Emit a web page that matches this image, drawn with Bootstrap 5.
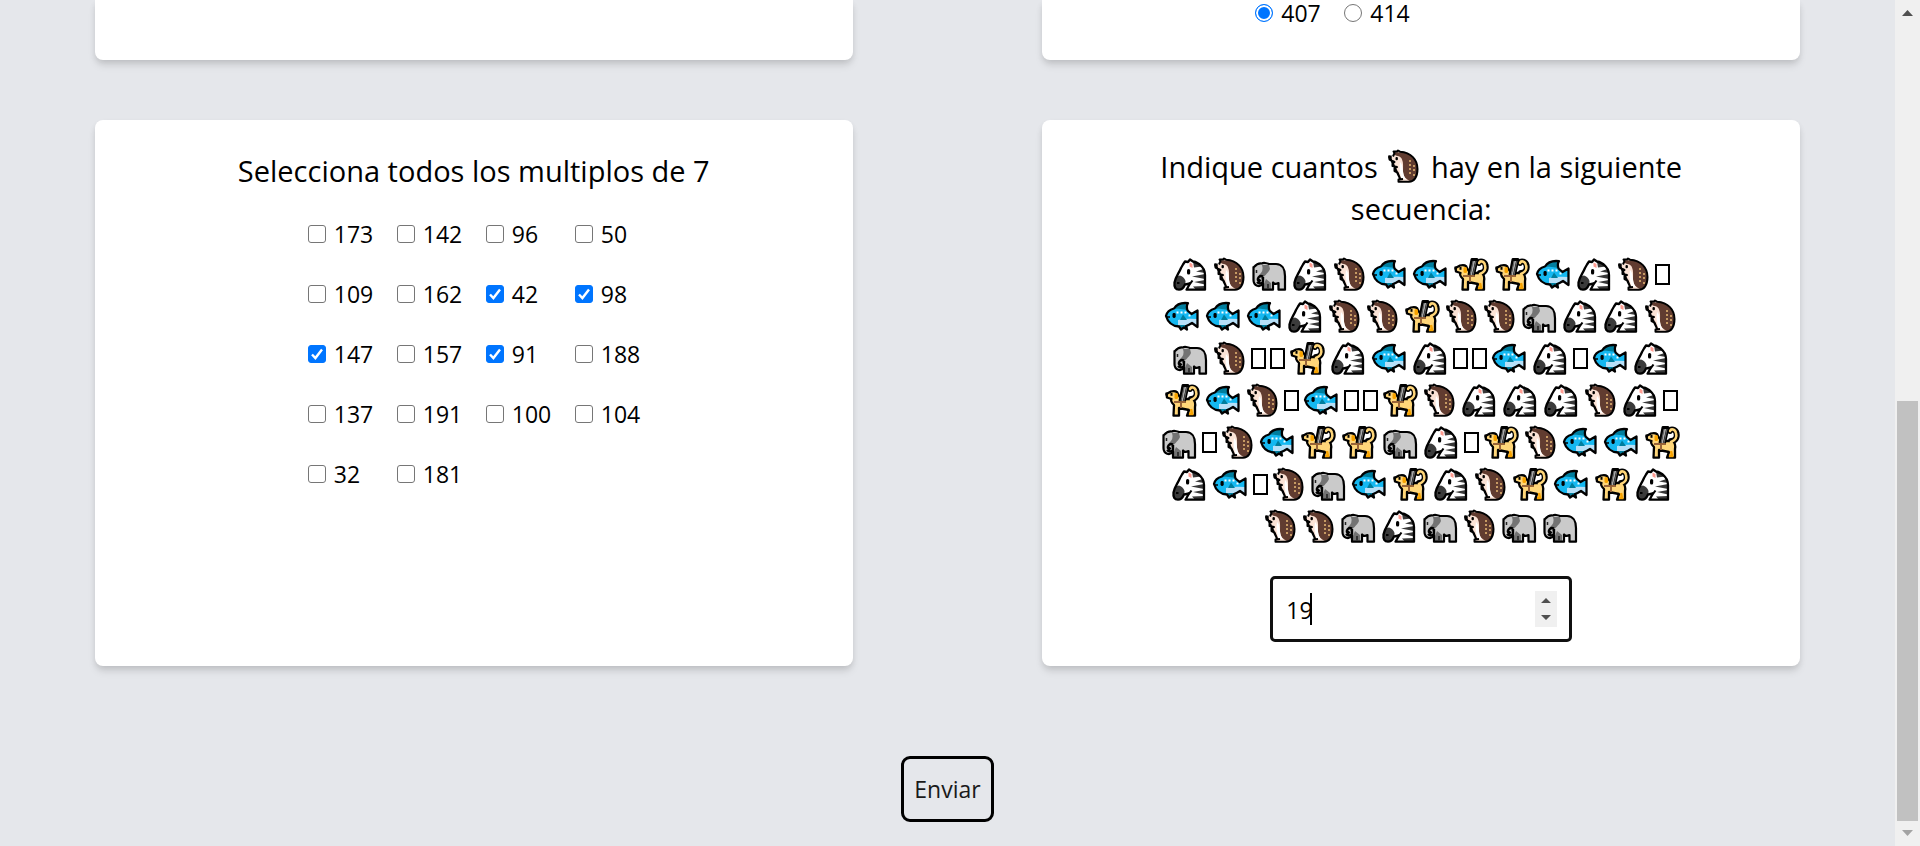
<!DOCTYPE html>
<html lang="es">
<head>
<meta charset="utf-8">
<meta name="viewport" content="width=device-width, initial-scale=1">
<title>Cuestionario</title>
<link href="https://cdn.jsdelivr.net/npm/bootstrap@5.3.0/dist/css/bootstrap.min.css" rel="stylesheet">
<style>
  body { background: #e5e7eb; color: #000; font: 23px/36px "Open Sans", "Noto Sans", sans-serif; }
  .quiz-card { width: 80%; padding: 26px 0 24px; background: #fff; border-radius: 8px; box-shadow: 0 6px 9px -1px rgba(0,0,0,.1), 0 3px 6px -1px rgba(0,0,0,.1); }
  .quiz-card.is-cut { border-radius: 0 0 8px 8px; height: 60px; padding: 0; }
  .is-cut .choice { line-height: 26px; }
  .quiz-row { margin-top: 60px; }
  .quiz-title { font-size: 29px; line-height: 42px; font-weight: 400; margin-bottom: 24px; }
  .quiz-title.single { margin-top: 4px; }
  .choices { display: grid; grid-template-columns: repeat(4, 65px); gap: 24px; justify-content: center; }
  .choice { display: flex; align-items: center; gap: 8px; white-space: nowrap; }
  .choice input { appearance: none; flex: none; width: 18px; height: 18px; margin: 0; border: 1px solid #767676; border-radius: 3px; background: #fff; }
  .choice input[type=radio] { border-radius: 50%; }
  .choice input:checked { border-color: #0075ff; background: #0075ff; }
  .choice input[type=checkbox]:checked { background: #0075ff url("data:image/svg+xml,%3Csvg xmlns='http://www.w3.org/2000/svg' viewBox='0 0 16 16'%3E%3Cpath d='M3 8.5l3.4 3.6L13 3.5' fill='none' stroke='%23fff' stroke-width='2.4'/%3E%3C/svg%3E") center/16px no-repeat; }
  .choice input[type=radio]:checked { box-shadow: inset 0 0 0 2px #fff; }
  .sequence-wrap { width: 70%; }
  .sequence { line-height: 42px; font-size: 0; }
  .animal { width: 41px; height: 42px; vertical-align: top; }
  .animal.narrow { width: 38px; }
  .animal.tofu { width: 19px; }
  .count-box { position: relative; width: 302px; margin-top: 28px; }
  .count-box input { width: 100%; height: 66px; padding: 2px 48px 0 13px; border: 3px solid #101010; border-radius: 5px; outline: 0; background: #fff; color: #000; caret-color: transparent; appearance: textfield; }
  .count-box input::-webkit-inner-spin-button { appearance: none; margin: 0; }
  .caret { position: absolute; left: 40px; top: 17px; width: 2px; height: 32px; background: #000; }
  .spinner { position: absolute; right: 15px; top: 15px; width: 22px; height: 36px; background: #f0f0f0; }
  .send-row { margin-top: 90px; }
  .send { width: 93px; height: 66px; border: 3px solid #000; border-radius: 9px; background: transparent; color: #1a1a1a; padding: 0; }
  .scroll-track { width: 25px; background: #f0f0f0; flex: none; }
  .scroll-arrow { width: 25px; height: 25px; flex: none; }
  .scroll-space { flex: 376 0 0; }
  .scroll-thumb { flex: 420 0 0; margin: 0 2px; background: #c1c1c1; }
</style>
</head>
<body class="d-flex vh-100 overflow-hidden">

<svg class="d-none" xmlns="http://www.w3.org/2000/svg">
  <symbol id="Z" viewBox="0 0 41 42">
    <path d="M13 10.500L15 7.500L18 8L20 5.500L23 7.500C29 8.500 35 14 35 21V35.700H16.500L20 29.500L15 30.500C13.500 34 11 35.700 9 35.700C5.500 35.700 4 33 4.500 28.500C5.500 23 9 19 11 14Z" fill="#fff"/>
    <path d="M23 7.500L32 12.500L24 13.500ZM26 17.500L35 14.500V19ZM22 22.500L35 20V25ZM24 28L35 26V30.500ZM23 32.500L35 32V35.700H26Z" fill="#383838"/>
    <path d="M6 22.500L10 21.500C15 23.500 17 27.500 14.500 31C13 34.500 10 36 7.500 35.500C4 34 3.500 28 6 22.500Z" fill="#3b3b3b"/>
    <path d="M19.500 8.500L22.500 10V14L19.500 12.500Z" fill="#ff9c91"/>
    <rect x="17" y="15" width="3.200" height="5.500" rx="1.500"/>
    <path d="M13 10.500L15 7.500L18 8L20 5.500L23 7.500C29 8.500 35 14 35 21V35.700H16.500L20 29.500L15 30.500C13.500 34 11 35.700 9 35.700C5.500 35.700 4 33 4.500 28.500C5.500 23 9 19 11 14Z" fill="none" stroke="#000" stroke-width="2.300" stroke-linejoin="round"/>
    <path d="M18 30.500Q21 29.500 22.500 26.500" fill="none" stroke="#000" stroke-width="2"/>
    <rect x="7" y="28" width="2.500" height="2"/>
  </symbol>
  <symbol id="H" viewBox="0 0 38 42">
    <path d="M10 6.500C25 5 32.500 13 32.500 23C32.500 31 29 35.700 24 35.700H13.500V33.500L15.500 32.500L12.500 26.500L9.500 25V22L12 21L7.500 19.500L8 16.500L4.500 13.500V10.500L8 10.500Z" fill="#fbe3d6"/>
    <path d="M9.500 6.500C25 5 32.500 13 32.500 23C32.500 30 29 34 25 35C20.500 33 18 30 18 25C18 20 18.500 17 17 13.500C16 10 12 10 9.500 9Z" fill="#613c30"/>
    <path d="M15 16C19 19 16.500 28 21 33.500L16.500 32Q13.500 24 15 16Z" fill="#fff"/>
    <path d="M24 15h2M24 19h2M24 23h2M24 27h2M28 20h2M28 24h2M28 29h2" stroke="#c69a63" stroke-width="1.800"/>
    <path d="M8 10.500L9.500 7L8.500 5.500H12L13 4.500L15 5.700C26 6.500 32.500 13.500 32.500 23C32.500 31 29 35.700 24 35.700H13.500V33.500L18 33M15 32.500L12.500 26.500L9.500 25V22L12 21L7.500 20V17L9.500 16L4.500 13.500V10.500Z" fill="none" stroke="#000" stroke-width="2" stroke-linejoin="round"/>
    <rect x="10.500" y="11" width="2.400" height="3.200" rx="1"/>
    <rect x="3.200" y="9.500" width="3.500" height="3"/>
  </symbol>
  <symbol id="E" viewBox="0 0 41 42">
    <path d="M5 13Q9 8.500 15 10H27C33 10 36 15 36 22V35.700H29L28 29L24 30V35.700H14V30C10 34 4.500 31.500 4.500 26Z" fill="#cacaca"/>
    <path d="M13 11H20L21 15C19 20 14 22 13 26L10 21Q15 17 13 11ZM17 25L22 29V35H14.500V31Z" fill="#737373"/>
    <path d="M5 13Q9 8.500 13 9.500C14 8.500 18 9 20 10H27C33 10 36 15 36 22V35.700H29.500V29Q26 31 24 28.500V35.700H14V29.500C11 34 4.500 32 4.500 26L4.500 13Z" fill="none" stroke="#000" stroke-width="2.200" stroke-linejoin="round"/>
    <path d="M14 22.500C10 20.500 7.500 25 10 27.500L11.500 25.500M14 23V28Q11 31 8 28" fill="none" stroke="#000" stroke-width="2.400"/>
    <path d="M19 30V35" stroke="#333" stroke-width="2"/>
    <path d="M7.500 16V19" stroke="#222" stroke-width="1.500"/>
  </symbol>
  <symbol id="F" viewBox="0 0 41 42">
    <path d="M4 20C6 13 14 11.500 20 12.500Q26 14 29.500 18L35.500 14.500V31L30 27Q20 32 14 30Q6 28 4 20Z" fill="#14b8f1"/>
    <path d="M16 24Q24 22 35 23V31L30 27Q21 31 16 29Z" fill="#b7e0f8"/>
    <path d="M12 13Q16 6 26 7.500Q24 10 25.500 14.500Q19 12 12 13ZM18 24L21 18.500L25 24ZM17 29L19 33.500L22 31L25 34L26 29Z" fill="#007e9e"/>
    <path d="M14.500 16.500h2M18.500 16.500h2M22.500 16.500h2M26.500 19.500h2" stroke="#fff" stroke-width="2"/>
    <path d="M12 12.500Q16 6 26 7.200Q24 10 25.500 14.500L29.500 18L35.500 14.500V31L30 27Q26 29.500 24 30L25 33.500L22 31.500L19 33.500L17 30.500Q7 30 4 20C5 15 8 13.500 12 12.500Z" fill="none" stroke="#000" stroke-width="2.300" stroke-linejoin="round"/>
    <rect x="10.500" y="17" width="3.200" height="5" rx="1.400"/><path d="M4 21H8" stroke="#000" stroke-width="1.500"/>
  </symbol>
  <symbol id="D" viewBox="0 0 41 42">
    <path d="M29 19C33 19 35.500 16 34.500 11C33.500 7 29 6.500 28 9" fill="none" stroke="#000" stroke-width="6" stroke-linecap="round"/>
    <path d="M4.500 14L9 11.500Q15 10 16 14L19 19H31Q34 22 33 27V35.700H25L27 30L17 28V35.700H11.500L12 25Q8 21 9.500 19L5 17.500Z" fill="#ffd679" stroke="#000" stroke-width="2.300" stroke-linejoin="round"/>
    <path d="M29 20C33 18 35.500 16 34 11C33 7 29 6.500 28 9" fill="none" stroke="#ffd679" stroke-width="2.600" stroke-linecap="round"/>
    <path d="M29 29L30 34H27" fill="none" stroke="#f8a300" stroke-width="2.500"/>
    <rect x="12.500" y="13" width="3.500" height="6" rx="1.500" fill="#f8a300"/>
    <path d="M12 22H24M19 21V28" stroke="#996438" stroke-width="2"/>
    <path d="M18 21L21 5.500H26L22.500 21" fill="#aaa" stroke="#000" stroke-width="3" stroke-linejoin="round"/>
    <path d="M19 21L22 7M22 21L25 7" stroke="#666" stroke-width="1"/>
    <rect x="8.500" y="13" width="2" height="2.800"/><rect x="3.500" y="12.500" width="2.500" height="3"/>
  </symbol>
  <symbol id="B" viewBox="0 0 19 42"><rect x="3" y="11" width="13" height="19" fill="#fff" stroke="#000" stroke-width="2"/></symbol>
</svg>

<main class="flex-grow-1">
  <form onsubmit="return false">
    <div class="row g-0">
      <div class="col-6 d-flex justify-content-center"><section class="quiz-card is-cut"></section></div>
      <div class="col-6 d-flex justify-content-center">
        <section class="quiz-card is-cut">
          <div class="choices">
            <label class="choice"><input type="radio" name="suma" checked>407</label>
            <label class="choice"><input type="radio" name="suma">414</label>
          </div>
        </section>
      </div>
    </div>

    <div class="row g-0 quiz-row">
      <div class="col-6 d-flex justify-content-center">
        <section class="quiz-card">
          <h2 class="quiz-title single text-center">Selecciona todos los multiplos de 7</h2>
          <div class="choices">
            <label class="choice"><input type="checkbox">173</label>
            <label class="choice"><input type="checkbox">142</label>
            <label class="choice"><input type="checkbox">96</label>
            <label class="choice"><input type="checkbox">50</label>
            <label class="choice"><input type="checkbox">109</label>
            <label class="choice"><input type="checkbox">162</label>
            <label class="choice"><input type="checkbox" checked>42</label>
            <label class="choice"><input type="checkbox" checked>98</label>
            <label class="choice"><input type="checkbox" checked>147</label>
            <label class="choice"><input type="checkbox">157</label>
            <label class="choice"><input type="checkbox" checked>91</label>
            <label class="choice"><input type="checkbox">188</label>
            <label class="choice"><input type="checkbox">137</label>
            <label class="choice"><input type="checkbox">191</label>
            <label class="choice"><input type="checkbox">100</label>
            <label class="choice"><input type="checkbox">104</label>
            <label class="choice"><input type="checkbox">32</label>
            <label class="choice"><input type="checkbox">181</label>
          </div>
        </section>
      </div>
      <div class="col-6 d-flex justify-content-center">
        <section class="quiz-card d-flex flex-column align-items-center">
          <div class="sequence-wrap text-center">
            <h2 class="quiz-title"><label for="count">Indique cuantos <svg class="animal narrow" role="img" aria-label="erizo"><use href="#H"/></svg> hay en la siguiente secuencia:</label></h2>
            <div class="sequence" id="sequence"></div>
          </div>
          <div class="count-box">
            <input type="number" id="count" value="19">
            <span class="caret"></span>
            <svg class="spinner" viewBox="0 0 22 36" aria-hidden="true"><path d="M6 12L11 7L16 12ZM6 24L11 29L16 24Z" fill="#505050"/></svg>
          </div>
        </section>
      </div>
    </div>

    <div class="text-center send-row"><button type="submit" class="send">Enviar</button></div>
  </form>
</main>

<div class="scroll-track d-flex flex-column vh-100" aria-hidden="true">
  <svg class="scroll-arrow" viewBox="0 0 25 25"><path d="M7 16L12.500 10L18 16Z" fill="#505050"/></svg>
  <div class="scroll-space"></div>
  <div class="scroll-thumb"></div>
  <svg class="scroll-arrow" viewBox="0 0 25 25"><path d="M7 9L12.500 15L18 9Z" fill="#a3a3a3"/></svg>
</div>

<script src="https://cdn.jsdelivr.net/npm/bootstrap@5.3.0/dist/js/bootstrap.bundle.min.js"></script>
<script>
  // Z zebra, H hedgehog, E elephant, F fish, D dog, B missing glyph
  const animals = "ZHEZHFFDDFZHB" + "FFFZHHDHHEZZH" + "EHBBDZFZBBFZBFZ" + "DFHBFBBDHZZZHZB" + "EBHFDDEZBDHFFD" + "ZFBHEFDZHDFDZ" + "HHEZEHEE";
  const extra = { H: " narrow", B: " tofu" };
  document.getElementById("sequence").innerHTML = [...animals].map(a =>
    `<svg class="animal${extra[a] || ""}"><use href="#${a}"/></svg>`).join("<wbr>");
</script>
</body>
</html>
